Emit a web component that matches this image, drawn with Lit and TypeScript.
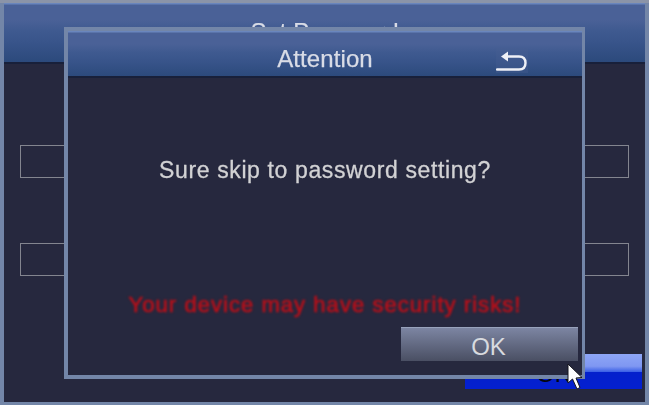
import { LitElement, html, css } from "lit";
import { customElement } from "lit/decorators.js";

@customElement("app-root")
export class AppRoot extends LitElement {
  static styles = css`
    :host {
      display: block;
      position: relative;
      width: 649px;
      height: 405px;
      overflow: hidden;
      background: #8b94a8;
      font-family: "Liberation Sans", Arial, sans-serif;
    }
    .window {
      box-sizing: border-box;
      margin-top: 3px;
      height: 402px;
      display: flex;
      flex-direction: column;
      background: #26283e;
      border-left: 4px solid #7386a8;
      border-right: 4px solid #7386a8;
      border-bottom: 3px solid #7386a8;
    }
    .bar {
      flex: none;
      display: flex;
      align-items: center;
      justify-content: center;
      box-sizing: border-box;
      background: linear-gradient(
        #6a86bd 0,
        #6a86bd 1px,
        #4a6197 2px,
        #4a6197 28%,
        #3f5a90 45%,
        #38548a 65%,
        #2c4a7c 96%,
        #18203a 96%
      );
      color: #d9dce6;
      font-size: 24px;
    }
    .title {
      filter: blur(0.35px);
      -webkit-text-stroke: 0.25px currentColor;
    }
    .window > .bar {
      height: 61px;
      align-items: flex-start;
      padding-top: 15px;
      line-height: 28px;
    }
    .body {
      flex: 1;
      display: flex;
      flex-direction: column;
      gap: 65px;
      padding: 81px 16px 0;
    }
    .row {
      display: flex;
      justify-content: space-between;
    }
    .field {
      box-sizing: border-box;
      width: 200px;
      height: 33px;
      border: 1px solid #83858f;
    }
    .footer {
      margin: auto -13px 0 0;
      display: flex;
      justify-content: flex-end;
      padding: 0 0 13px 0;
    }
    .save {
      box-sizing: border-box;
      width: 177px;
      height: 35px;
      padding-top: 4px;
      display: flex;
      align-items: center;
      justify-content: center;
      color: #05060f;
      font-size: 24px;
      background: linear-gradient(
        #8ea6f6 0,
        #7f97f2 35%,
        #3f63e6 50%,
        #0420cc 52%,
        #0420d0 100%
      );
    }
    .dialog {
      position: absolute;
      left: 64px;
      top: 27px;
      box-sizing: border-box;
      width: 521px;
      height: 352px;
      display: flex;
      flex-direction: column;
      background: #26283e;
      border: 4px solid #7386a8;
      border-right-width: 3px;
    }
    .dialog > .bar {
      position: relative;
      height: 47px;
      padding-top: 9px;
      letter-spacing: 0.1px;
    }
    .back {
      position: absolute;
      left: 428px;
      top: 17px;
      width: 32px;
      height: 25px;
      background: rgba(72, 94, 146, 0.35);
    }
    .content {
      flex: 1;
      display: flex;
      flex-direction: column;
      align-items: center;
      padding-top: 79px;
    }
    .message {
      color: #d2d2d4;
      font-size: 23px;
      line-height: 26px;
      letter-spacing: 0.62px;
      -webkit-text-stroke: 0.3px currentColor;
      filter: blur(0.35px);
    }
    .warning {
      margin-top: 109px;
      color: #b5101a;
      font-size: 22px;
      line-height: 26px;
      letter-spacing: 1.05px;
      -webkit-text-stroke: 0.7px currentColor;
      filter: blur(0.9px);
    }
    .actions {
      align-self: stretch;
      display: flex;
      justify-content: flex-end;
      padding: 9px 4px 0 0;
    }
    .ok {
      box-sizing: border-box;
      width: 177px;
      height: 34px;
      padding: 5px 2px 0 0;
      display: flex;
      align-items: center;
      justify-content: center;
      color: #d8dadf;
      font-size: 24px;
      border-top: 1px solid #98a2bb;
      background: linear-gradient(#7c85a2, #4a4f63);
    }
    .cursor {
      position: absolute;
      left: 566px;
      top: 363px;
      width: 18px;
      height: 28px;
    }
  `;

  render() {
    return html`
      <div class="window">
        <div class="bar"><span class="title">Set Password</span></div>
        <div class="body">
          <div class="row"><div class="field"></div><div class="field"></div></div>
          <div class="row"><div class="field"></div><div class="field"></div></div>
          <div class="footer"><div class="save">OK</div></div>
        </div>
      </div>
      <div class="dialog">
        <div class="bar">
          <span class="title">Attention</span>
          <svg class="back" viewBox="0 0 32 25" fill="none">
            <path d="M5 8.5 L12 3.5 L12 13.5 Z" fill="#eef0f6" />
            <path d="M11 8.5 H23 Q29.5 8.5 29.5 15 Q29.5 21.5 23 21.5 H1" stroke="#eef0f6" stroke-width="2.4" stroke-linecap="round" />
          </svg>
        </div>
        <div class="content">
          <div class="message">Sure skip to password setting?</div>
          <div class="warning">Your device may have security risks!</div>
          <div class="actions"><div class="ok">OK</div></div>
        </div>
      </div>
      <svg class="cursor" viewBox="0 0 18 28">
        <path d="M2 1 L2 20 L6.5 16 L11 26 L14 24.5 L10 15 L16 14.5 Z" fill="#ffffff" stroke="#15151f" stroke-width="1" />
      </svg>
    `;
  }
}
